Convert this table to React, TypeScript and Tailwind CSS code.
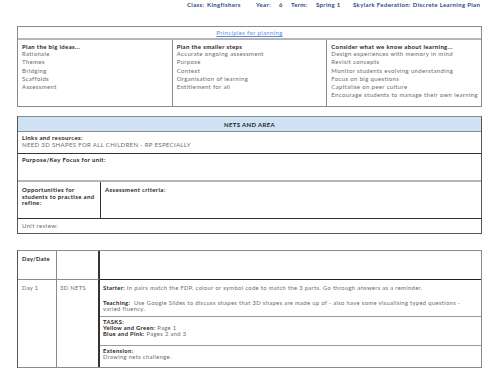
import React from 'react';

const font = { fontFamily: 'Lato, "Open Sans", sans-serif' };

const bigIdeas = ['Rationale', 'Themes', 'Bridging', 'Scaffolds', 'Assessment'];
const smallSteps = ['Accurate ongoing assessment', 'Purpose', 'Context', 'Organisation of learning', 'Entitlement for all'];
const learning = [
  'Design experiences with memory in mind',
  'Revisit concepts',
  'Monitor students evolving understanding',
  'Focus on big questions',
  'Capitalise on peer culture',
  'Encourage students to manage their own learning',
];

const Column: React.FC<{ title: string; items: string[]; last?: boolean }> = ({ title, items, last }) => (
  <div className={`flex-1 pl-[4px] pt-[3px] ${last ? '' : 'border-r border-[#8a8a8a]'}`}>
    <div className="font-bold text-[#1e1e1e] leading-[7px]">{title}</div>
    {items.map(i => (
      <div key={i} className="text-[#6b6b6b] leading-[8.3px]">{i}</div>
    ))}
  </div>
);

export default function App() {
  return (
    <div className="w-[500px] h-[386px] bg-white overflow-hidden text-[6px] tracking-[0.35px]" style={font}>
      {/* Header */}
      <div className="flex pl-[187px] pt-[1px] h-[26px] font-bold text-[#2e4a86] leading-[7px]">
        <span className="w-[20px]">Class:</span>
        <span className="w-[49px]">Kingfishers</span>
        <span className="w-[23px]">Year:</span>
        <span className="w-[12px]">6</span>
        <span className="w-[25px]">Term:</span>
        <span className="w-[37px]">Spring 1</span>
        <span className="whitespace-nowrap">Skylark Federation: Discrete Learning Plan</span>
      </div>

      {/* Principles table */}
      <div className="mx-[17px] w-[465px] border border-[#8a8a8a]">
        <div className="h-[13px] flex items-center justify-center border-b-2 border-[#b5b5b5]">
          <span className="text-[#5b8ee0] underline">Principles for planning</span>
        </div>
        <div className="flex h-[66px]">
          <Column title="Plan the big ideas..." items={bigIdeas} />
          <Column title="Plan the smaller steps" items={smallSteps} />
          <Column title="Consider what we know about learning..." items={learning} last />
        </div>
      </div>

      {/* Unit table */}
      <div className="mx-[17px] mt-[9px] w-[465px] border border-[#555] border-t-[#8a8a8a]">
        <div className="h-[15px] bg-[#cfe2f3] flex items-center justify-center font-bold text-[#1e1e1e] border-b border-[#8a8a8a]">
          NETS AND AREA
        </div>
        <div className="h-[22px] pl-[4px] pt-[2px] border-b border-[#333]">
          <div className="font-bold text-[#1e1e1e] leading-[7px]">Links and resources:</div>
          <div className="text-[#6b6b6b] leading-[7px]">NEED 3D SHAPES FOR ALL CHILDREN - RP ESPECIALLY</div>
        </div>
        <div className="h-[28px] pl-[4px] pt-[2px] border-b-2 border-[#b5b5b5]">
          <div className="font-bold text-[#1e1e1e] leading-[7px]">Purpose/Key Focus for unit:</div>
        </div>
        <div className="h-[37px] flex border-b border-[#333]">
          <div className="w-[83px] pl-[4px] pr-[2px] pt-[5px] border-r border-[#333] font-bold text-[#1e1e1e] leading-[6.5px]">
            Opportunities for students to practise and refine:
          </div>
          <div className="flex-1 pl-[4px] pt-[5px] font-bold text-[#1e1e1e] leading-[6.5px]">Assessment criteria:</div>
        </div>
        <div className="h-[14px] pl-[4px] pt-[3px] text-[#6b6b6b] leading-[7px]">Unit review:</div>
      </div>

      {/* Day table */}
      <div className="mx-[17px] mt-[16px] w-[465px] border border-[#8a8a8a] border-l-[#555] text-[5.8px]">
        <div className="flex h-[29px]">
          <div className="w-[39px] pl-[4px] pt-[5px] border-r border-[#8a8a8a] border-b border-b-[#8a8a8a] font-bold text-[#1e1e1e] leading-[6px]">
            Day/Date
          </div>
          <div className="w-[43px] border-r-2 border-[#333] border-b border-b-[#8a8a8a]" />
          <div className="flex-1 border-b border-[#222]" />
        </div>
        <div className="flex h-[87px]">
          <div className="w-[39px] pl-[4px] pt-[5px] border-r border-[#8a8a8a] text-[#6b6b6b] leading-[6px]">Day 1</div>
          <div className="w-[43px] pl-[3px] pt-[5px] border-r-2 border-[#333] text-[#6b6b6b] leading-[6px]">3D NETS</div>
          <div className="flex-1 flex flex-col">
            <div className="h-[37px] pl-[3px] pt-[5px] pr-[8px] border-b border-[#9a9a9a] text-[#6b6b6b] leading-[6.7px]">
              <div><span className="font-bold text-[#1e1e1e]">Starter:</span> In pairs match the FDP. colour or symbol code to match the 3 parts. Go through answers as a reminder.</div>
              <div className="mt-[8px] whitespace-nowrap">
                <span className="font-bold text-[#1e1e1e]">Teaching:</span>&nbsp; Use Google Slides to discuss shapes that 3D shapes are made up of - also have some visualising typed questions -
              </div>
              <div>varied fluency.</div>
            </div>
            <div className="h-[29px] pl-[3px] pt-[2px] border-b border-[#9a9a9a] text-[#6b6b6b] leading-[6px]">
              <div className="font-bold text-[#1e1e1e]">TASKS:</div>
              <div><span className="font-bold text-[#1e1e1e]">Yellow and Green:</span> Page 1</div>
              <div><span className="font-bold text-[#1e1e1e]">Blue and Pink:</span> Pages 2 and 3</div>
            </div>
            <div className="flex-1 pl-[3px] pt-[2px] text-[#6b6b6b] leading-[6px]">
              <div className="font-bold text-[#1e1e1e]">Extension:</div>
              <div>Drawing nets challenge.</div>
            </div>
          </div>
        </div>
      </div>
    </div>
  );
}
